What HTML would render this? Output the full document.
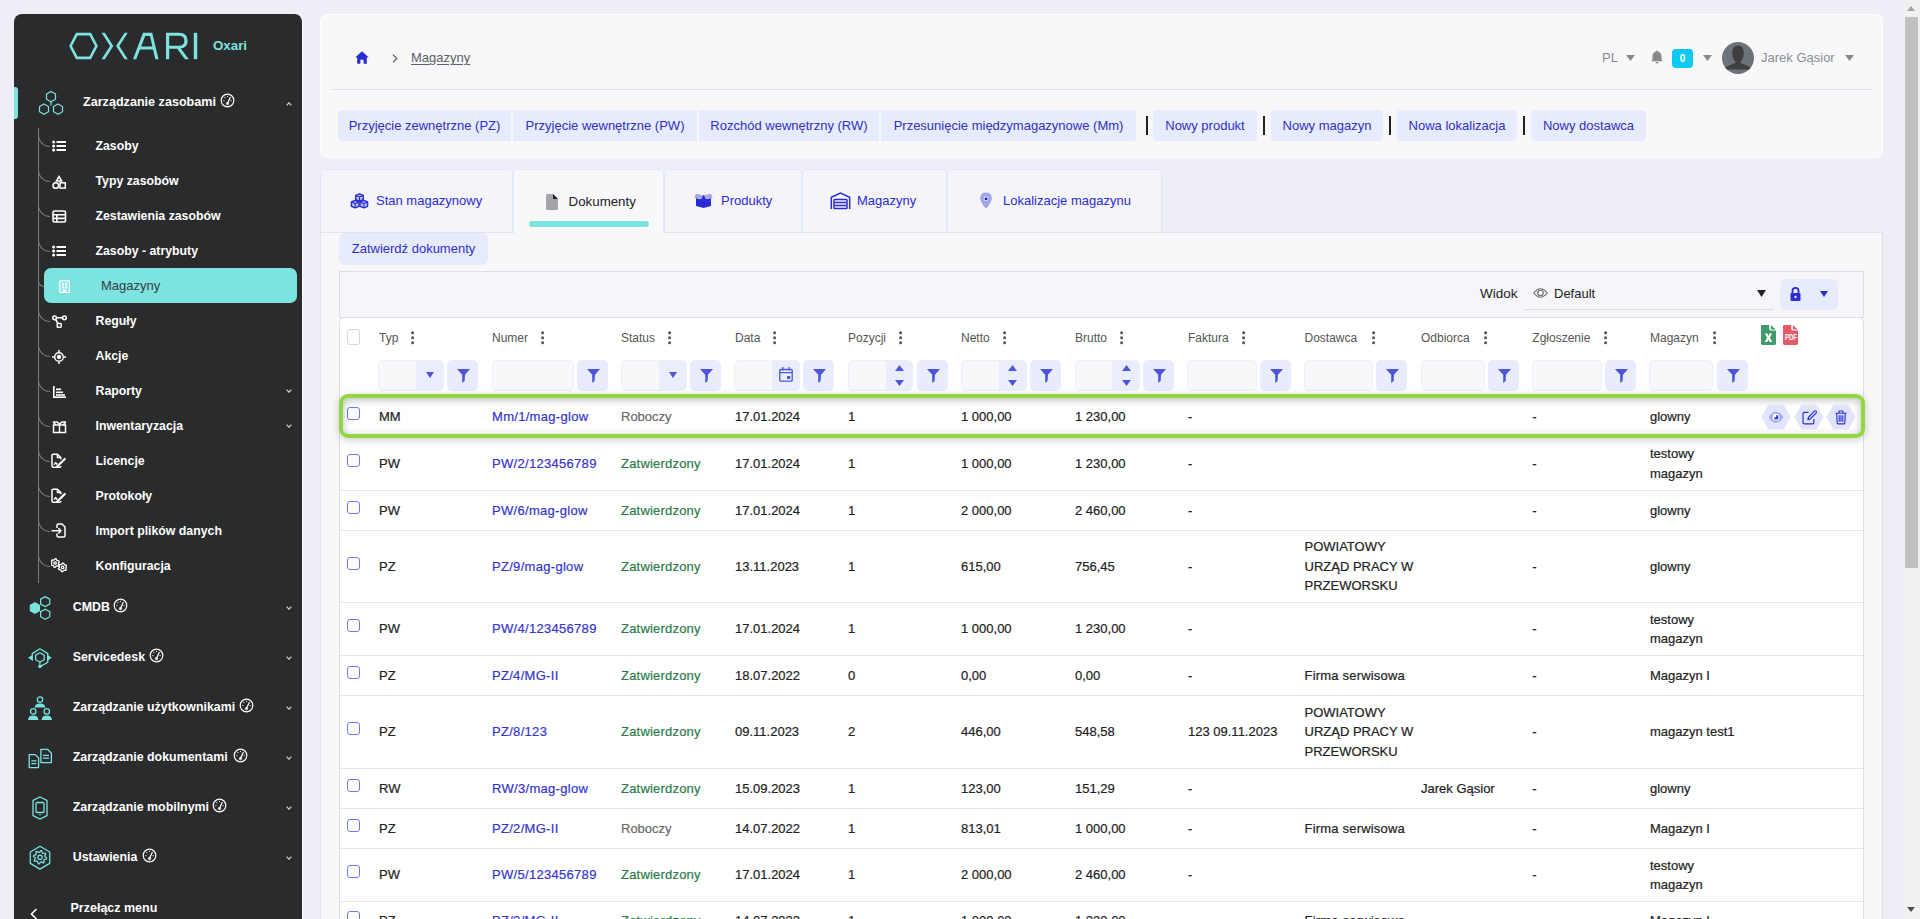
<!DOCTYPE html>
<html><head><meta charset="utf-8">
<style>
*{box-sizing:border-box;margin:0;padding:0}
html,body{width:1920px;height:919px;overflow:hidden;background:#eeeef7;font-family:"Liberation Sans",sans-serif;position:relative}
.abs{position:absolute}
.curve{position:absolute;left:38px;width:12px;height:12px;border-left:1.3px solid #7a7a7a;border-bottom:1.3px solid #7a7a7a;border-bottom-left-radius:12px}
.st{position:absolute;color:#fff;font-weight:bold;line-height:16px;white-space:nowrap}
.c{position:absolute;display:flex;align-items:center;font-size:13px;line-height:19.5px;white-space:nowrap;color:#222;-webkit-text-stroke:0.2px currentColor}
</style></head><body><div style="position:relative;width:1920px;height:919px;overflow:hidden">

<div class="abs" style="left:14px;top:14px;width:289px;height:920px;background:#2a2b2d;border-radius:8px 8px 0 0;border-right:1px solid #fff"></div>
<svg class="abs" style="left:68px;top:32px" width="132" height="28" viewBox="0 0 132 28">
<g fill="none" stroke="#7de3de" stroke-width="2.6" stroke-linejoin="miter">
<path d="M2.6 14 L8.8 2.1 L22.2 2.1 L28.4 14 L22.2 25.9 L8.8 25.9 Z"/>
</g>
<path d="M33.6 .8 H36.8 L45.3 14 L36.8 27.2 H33.6 L42.1 14 Z" fill="#7de3de"/>
<path d="M59.8 .8 H56.6 L48.1 14 L56.6 27.2 H59.8 L51.3 14 Z" fill="#7de3de"/>
<path d="M65 27.2 L75 .8 H84.2 L90.5 27.2 H87.3 L82 4 H77.2 L68.2 27.2 Z M71.8 14.6 H86.3 V17.4 H71.8 Z" fill="#7de3de"/>
<path d="M98 27.2 V.8 H111 Q119.6 .8 119.6 8.8 Q119.6 15.6 112.8 16.6 L120.8 27.2 H117 L109.2 16.8 H101.2 V27.2 Z M101.2 3.8 V13.8 H110.8 Q116.4 13.8 116.4 8.8 Q116.4 3.8 110.8 3.8 Z" fill="#7de3de"/>
<rect x="125.8" y=".8" width="3.4" height="26.4" fill="#7de3de"/>
</svg>
<div class="abs" style="left:213px;top:38px;color:#7de3de;font-weight:bold;font-size:13.3px;line-height:16px">Oxari</div>
<div class="abs" style="left:14px;top:87px;width:4px;height:32px;background:#7de3de;border-radius:0 3px 3px 0"></div>
<svg class="abs" style="left:38px;top:90px" width="26" height="26" viewBox="0 0 26 26"><g fill="none" stroke="#7de3de" stroke-width="1.2">
<path d="M13 1.3999999999999995 L17.5 3.9999999999999996 V9.2 L13 11.8 L8.5 9.2 V3.9999999999999996 Z"/><path d="M6 13.900000000000002 L10.5 16.5 V21.700000000000003 L6 24.3 L1.5 21.700000000000003 V16.5 Z"/><path d="M20 13.900000000000002 L24.5 16.5 V21.700000000000003 L20 24.3 L15.5 21.700000000000003 V16.5 Z"/><path d="M13 11.8 V15.5"/></g></svg>
<div class="st" style="left:83px;top:94px;font-size:12.6px">Zarządzanie zasobami</div>
<svg class="abs" style="left:220px;top:93px" width="15" height="15" viewBox="0 0 15 15"><circle cx="7.5" cy="7.5" r="6.3" fill="none" stroke="#fff" stroke-width="1.2"/><path d="M7.5 10.6 L10.2 4.6" stroke="#fff" stroke-width="1.2" stroke-linecap="round"/><circle cx="7.5" cy="10.6" r="1.2" fill="none" stroke="#fff" stroke-width="1"/><circle cx="3.9" cy="7.6" r=".6" fill="#fff"/><circle cx="4.9" cy="4.6" r=".6" fill="#fff"/><circle cx="7.5" cy="3.3" r=".6" fill="#fff"/><circle cx="11.1" cy="7.6" r=".6" fill="#fff"/></svg>
<svg class="abs" style="left:286px;top:102px" width="6" height="4" viewBox="0 0 6 4"><path d="M.6 3.4 L3 .8 L5.4 3.4" fill="none" stroke="#cfcfcf" stroke-width="1.2"/></svg>
<div class="abs" style="left:38px;top:128px;width:1.3px;height:455px;background:#7a7a7a"></div>
<div class="curve" style="top:135px"></div>
<svg class="abs" style="left:52px;top:140px" width="15" height="14" viewBox="0 0 15 14"><g fill="#fff"><circle cx="1.6" cy="2" r="1.5"/><circle cx="1.6" cy="6" r="1.5"/><circle cx="1.6" cy="10" r="1.5"/><rect x="4.5" y="1" width="9.5" height="2"/><rect x="4.5" y="5" width="9.5" height="2"/><rect x="4.5" y="9" width="9.5" height="2"/></g></svg>
<div class="st" style="left:95.5px;top:138px;font-size:12.3px">Zasoby</div>
<div class="curve" style="top:170px"></div>
<svg class="abs" style="left:52px;top:175px" width="15" height="14" viewBox="0 0 15 14"><g fill="none" stroke="#fff" stroke-width="1.5"><path d="M7 1.5 L9.6 6 H4.4 Z"/><circle cx="3.8" cy="10.5" r="2.8"/><rect x="8" y="7.8" width="5.3" height="5.3"/></g></svg>
<div class="st" style="left:95.5px;top:173px;font-size:12.3px">Typy zasobów</div>
<div class="curve" style="top:205px"></div>
<svg class="abs" style="left:52px;top:210px" width="15" height="14" viewBox="0 0 15 14"><g fill="none" stroke="#fff" stroke-width="1.6"><rect x="1" y="1" width="12.5" height="11" rx="1.5"/><path d="M1 4.8 H13.5 M1 8.4 H13.5 M4.8 4.8 V12"/></g></svg>
<div class="st" style="left:95.5px;top:208px;font-size:12.3px">Zestawienia zasobów</div>
<div class="curve" style="top:240px"></div>
<svg class="abs" style="left:52px;top:245px" width="15" height="14" viewBox="0 0 15 14"><g fill="#fff"><circle cx="1.6" cy="2" r="1.5"/><circle cx="1.6" cy="6" r="1.5"/><circle cx="1.6" cy="10" r="1.5"/><rect x="4.5" y="1" width="9.5" height="2"/><rect x="4.5" y="5" width="9.5" height="2"/><rect x="4.5" y="9" width="9.5" height="2"/></g></svg>
<div class="st" style="left:95.5px;top:243px;font-size:12.3px">Zasoby - atrybuty</div>
<div class="curve" style="top:275px;width:6px"></div>
<div class="abs" style="left:44px;top:268px;width:253px;height:35px;background:#7de3de;border-radius:7px"></div>
<svg class="abs" style="left:59px;top:280px" width="11" height="13" viewBox="0 0 11 13"><g><rect x=".7" y=".7" width="9.8" height="12" rx="1.8" fill="none" stroke="#fff" stroke-width="1.4"/><rect x="2.4" y="2.4" width="6.4" height="8.6" fill="#8ff0f0"/><g fill="#fff"><rect x="3" y="3.2" width="2" height="2"/><rect x="6.2" y="3.2" width="2" height="2"/><rect x="3" y="6.2" width="2" height="2"/><rect x="6.2" y="6.2" width="2" height="2"/><path d="M3.8 12 V9.8 Q5.6 8.6 7.4 9.8 V12 Z"/></g></g></svg>
<div class="abs" style="left:101px;top:278px;color:#363b47;font-size:13px;line-height:16px;white-space:nowrap">Magazyny</div>
<div class="curve" style="top:310px"></div>
<svg class="abs" style="left:52px;top:315px" width="15" height="14" viewBox="0 0 15 14"><g fill="none" stroke="#fff" stroke-width="1.5"><circle cx="2.6" cy="2.8" r="1.9"/><circle cx="12.4" cy="2.8" r="1.9"/><rect x="5.2" y="8.5" width="4" height="3.8" rx=".6"/><path d="M4.5 2.8 H10.5 M3.6 4.5 L6 8.5"/></g></svg>
<div class="st" style="left:95.5px;top:313px;font-size:12.3px">Reguły</div>
<div class="curve" style="top:345px"></div>
<svg class="abs" style="left:52px;top:350px" width="15" height="14" viewBox="0 0 15 14"><g fill="none" stroke="#fff" stroke-width="1.5"><circle cx="7" cy="7" r="4.3"/><circle cx="7" cy="7" r="1.4" fill="#fff"/><path d="M7 0 V2.5 M7 11.5 V14 M0 7 H2.5 M11.5 7 H14"/></g></svg>
<div class="st" style="left:95.5px;top:348px;font-size:12.3px">Akcje</div>
<div class="curve" style="top:380px"></div>
<svg class="abs" style="left:52px;top:385px" width="15" height="14" viewBox="0 0 15 14"><g fill="#fff"><rect x="1" y="1" width="1.6" height="12"/><rect x="1" y="11.4" width="13" height="1.6"/><rect x="4" y="3.5" width="5" height="1.6"/><rect x="4" y="6.5" width="7" height="1.6"/><rect x="4" y="9.2" width="9" height="1.6"/></g></svg>
<div class="st" style="left:95.5px;top:383px;font-size:12.3px">Raporty</div>
<svg class="abs" style="left:286px;top:389px" width="6" height="4" viewBox="0 0 6 4"><path d="M.6 .6 L3 3.2 L5.4 .6" fill="none" stroke="#cfcfcf" stroke-width="1.2"/></svg>
<div class="curve" style="top:415px"></div>
<svg class="abs" style="left:52px;top:420px" width="15" height="14" viewBox="0 0 15 14"><g fill="none" stroke="#fff" stroke-width="1.5"><path d="M1.5 5 H13.5 V12.5 H1.5 Z M7.5 5 V12.5 M1 2 L4 5 M14 2 L11 5 M1 2 H5 L7.5 4 L10 2 H14"/></g></svg>
<div class="st" style="left:95.5px;top:418px;font-size:12.3px">Inwentaryzacja</div>
<svg class="abs" style="left:286px;top:424px" width="6" height="4" viewBox="0 0 6 4"><path d="M.6 .6 L3 3.2 L5.4 .6" fill="none" stroke="#cfcfcf" stroke-width="1.2"/></svg>
<div class="curve" style="top:450px"></div>
<svg class="abs" style="left:51px;top:452px" width="16" height="17" viewBox="0 0 16 17"><g fill="none" stroke="#fff" stroke-width="1.5" stroke-linejoin="round"><path d="M9.8 7.2 V5.6 L6.4 2.2 H2.2 Q1 2.2 1 3.4 V14 Q1 15.2 2.2 15.2 H8.6 Q9.8 15.2 9.8 14"/><path d="M6.4 2.2 V5.6 H9.8"/><path d="M3 12.6 L4.6 10.6 L5.6 12 L6.4 11.4"/></g><path d="M5.6 13.4 L13 6.2 Q13.8 5.4 14.6 6.2 Q15.4 7 14.6 7.8 L7.2 15 L5 15.6 Z" fill="#fff"/></svg>
<div class="st" style="left:95.5px;top:453px;font-size:12.3px">Licencje</div>
<div class="curve" style="top:485px"></div>
<svg class="abs" style="left:51px;top:487px" width="16" height="17" viewBox="0 0 16 17"><g fill="none" stroke="#fff" stroke-width="1.5" stroke-linejoin="round"><path d="M9.8 7.2 V5.6 L6.4 2.2 H2.2 Q1 2.2 1 3.4 V14 Q1 15.2 2.2 15.2 H8.6 Q9.8 15.2 9.8 14"/><path d="M6.4 2.2 V5.6 H9.8"/><path d="M3 12.6 L4.6 10.6 L5.6 12 L6.4 11.4"/></g><path d="M5.6 13.4 L13 6.2 Q13.8 5.4 14.6 6.2 Q15.4 7 14.6 7.8 L7.2 15 L5 15.6 Z" fill="#fff"/></svg>
<div class="st" style="left:95.5px;top:488px;font-size:12.3px">Protokoły</div>
<div class="curve" style="top:520px"></div>
<svg class="abs" style="left:51px;top:522px" width="16" height="17" viewBox="0 0 16 17"><g fill="none" stroke="#fff" stroke-width="1.5" stroke-linejoin="round"><path d="M6 6 V3.2 Q6 2 7.2 2 H11 L14 5 V13.8 Q14 15 12.8 15 H7.2 Q6 15 6 13.8 V11.5"/><path d="M.5 8.8 H10 M7.4 6.2 L10 8.8 L7.4 11.4"/></g></svg>
<div class="st" style="left:95.5px;top:523px;font-size:12.3px">Import plików danych</div>
<div class="curve" style="top:555px"></div>
<svg class="abs" style="left:51px;top:557px" width="16" height="17" viewBox="0 0 16 17"><g fill="none" stroke="#fff" stroke-width="1.3" stroke-linejoin="round"><path d="M4.10 1.70 L5.21 1.85 L5.75 3.14 L6.43 3.67 L7.82 3.85 L8.25 4.89 L7.40 6.00 L7.29 6.85 L7.82 8.15 L7.14 9.04 L5.75 8.86 L4.95 9.19 L4.10 10.30 L2.99 10.15 L2.45 8.86 L1.77 8.33 L0.38 8.15 L-0.05 7.11 L0.80 6.00 L0.91 5.15 L0.38 3.85 L1.06 2.96 L2.45 3.14 L3.25 2.81 Z"/><path d="M11.60 6.10 L12.71 6.25 L13.25 7.54 L13.93 8.07 L15.32 8.25 L15.75 9.29 L14.90 10.40 L14.79 11.25 L15.32 12.55 L14.64 13.44 L13.25 13.26 L12.45 13.59 L11.60 14.70 L10.49 14.55 L9.95 13.26 L9.27 12.73 L7.88 12.55 L7.45 11.51 L8.30 10.40 L8.41 9.55 L7.88 8.25 L8.56 7.36 L9.95 7.54 L10.75 7.21 Z"/><circle cx="4.1" cy="6" r="1.2"/><circle cx="11.6" cy="10.4" r="1.2"/></g></svg>
<div class="st" style="left:95.5px;top:558px;font-size:12.3px">Konfiguracja</div>
<svg class="abs" style="left:29px;top:596px" width="22" height="25" viewBox="0 0 22 25"><g fill="none" stroke="#7de3de" stroke-width="1.2"><path d="M16.2 0.5999999999999996 L20.799999999999997 3.0999999999999996 V8.1 L16.2 10.6 L11.6 8.1 V3.0999999999999996 Z"/><path d="M16.2 13.2 L20.799999999999997 15.7 V20.7 L16.2 23.2 L11.6 20.7 V15.7 Z"/></g><path d="M5.9 6 L11.05 9.0 V15.0 L5.9 18 L0.75 15.0 V9.0 Z" fill="#7de3de"/></svg>
<div class="st" style="left:72.7px;top:599px;font-size:12.4px">CMDB</div>
<svg class="abs" style="left:113px;top:598px" width="15" height="15" viewBox="0 0 15 15"><circle cx="7.5" cy="7.5" r="6.3" fill="none" stroke="#fff" stroke-width="1.2"/><path d="M7.5 10.6 L10.2 4.6" stroke="#fff" stroke-width="1.2" stroke-linecap="round"/><circle cx="7.5" cy="10.6" r="1.2" fill="none" stroke="#fff" stroke-width="1"/><circle cx="3.9" cy="7.6" r=".6" fill="#fff"/><circle cx="4.9" cy="4.6" r=".6" fill="#fff"/><circle cx="7.5" cy="3.3" r=".6" fill="#fff"/><circle cx="11.1" cy="7.6" r=".6" fill="#fff"/></svg>
<svg class="abs" style="left:286px;top:606px" width="6" height="4" viewBox="0 0 6 4"><path d="M.6 .6 L3 3.2 L5.4 .6" fill="none" stroke="#cfcfcf" stroke-width="1.2"/></svg>
<svg class="abs" style="left:28px;top:647px" width="24" height="22" viewBox="0 0 24 22"><g fill="none" stroke="#7de3de" stroke-width="1.25" stroke-linejoin="round"><path d="M11.9 5.800000000000001 L16.2 8.100000000000001 V12.7 L11.9 15.0 L7.6000000000000005 12.7 V8.100000000000001 Z"/><path d="M4.3 8.2 V6.6 L11.9 1.8 L19.8 6.6 V15.3 L12.6 19.4"/><path d="M11.9 15 V18.6"/></g><path d="M0.1 10.8 L4.9 7.6 V13.9 Z M23.7 10.8 L19 7.6 V13.9 Z" fill="#7de3de"/><circle cx="11.9" cy="19.4" r="1.7" fill="#7de3de"/></svg>
<div class="st" style="left:72.7px;top:649px;font-size:12.4px">Servicedesk</div>
<svg class="abs" style="left:149px;top:648px" width="15" height="15" viewBox="0 0 15 15"><circle cx="7.5" cy="7.5" r="6.3" fill="none" stroke="#fff" stroke-width="1.2"/><path d="M7.5 10.6 L10.2 4.6" stroke="#fff" stroke-width="1.2" stroke-linecap="round"/><circle cx="7.5" cy="10.6" r="1.2" fill="none" stroke="#fff" stroke-width="1"/><circle cx="3.9" cy="7.6" r=".6" fill="#fff"/><circle cx="4.9" cy="4.6" r=".6" fill="#fff"/><circle cx="7.5" cy="3.3" r=".6" fill="#fff"/><circle cx="11.1" cy="7.6" r=".6" fill="#fff"/></svg>
<svg class="abs" style="left:286px;top:656px" width="6" height="4" viewBox="0 0 6 4"><path d="M.6 .6 L3 3.2 L5.4 .6" fill="none" stroke="#cfcfcf" stroke-width="1.2"/></svg>
<svg class="abs" style="left:28px;top:696px" width="24" height="24" viewBox="0 0 24 24"><g fill="none" stroke="#7de3de" stroke-width="1.3"><circle cx="12" cy="3.6" r="2.7"/><circle cx="5.2" cy="15.4" r="2.7"/><circle cx="18.8" cy="15.4" r="2.7"/></g><path d="M6.6 11.6 Q7 7.6 12 7.6 Q17 7.6 17.4 11.6 Z M0 24 Q0.4 19.6 5.2 19.6 Q10 19.6 10.4 24 Z M13.6 24 Q14 19.6 18.8 19.6 Q23.6 19.6 24 24 Z" fill="#7de3de"/></svg>
<div class="st" style="left:72.7px;top:699px;font-size:12.4px">Zarządzanie użytkownikami</div>
<svg class="abs" style="left:239px;top:698px" width="15" height="15" viewBox="0 0 15 15"><circle cx="7.5" cy="7.5" r="6.3" fill="none" stroke="#fff" stroke-width="1.2"/><path d="M7.5 10.6 L10.2 4.6" stroke="#fff" stroke-width="1.2" stroke-linecap="round"/><circle cx="7.5" cy="10.6" r="1.2" fill="none" stroke="#fff" stroke-width="1"/><circle cx="3.9" cy="7.6" r=".6" fill="#fff"/><circle cx="4.9" cy="4.6" r=".6" fill="#fff"/><circle cx="7.5" cy="3.3" r=".6" fill="#fff"/><circle cx="11.1" cy="7.6" r=".6" fill="#fff"/></svg>
<svg class="abs" style="left:286px;top:706px" width="6" height="4" viewBox="0 0 6 4"><path d="M.6 .6 L3 3.2 L5.4 .6" fill="none" stroke="#cfcfcf" stroke-width="1.2"/></svg>
<svg class="abs" style="left:28px;top:748px" width="25" height="21" viewBox="0 0 25 21"><g fill="none" stroke="#7de3de" stroke-width="1.3" stroke-linejoin="round"><path d="M1.2 6.6 H7.2 L10.6 10 V19.6 H1.2 Z"/><path d="M3.4 12.8 H8.4 M3.4 15.6 H8.4"/><path d="M12.9 1.3 H19.5 L23.4 5.2 V14.6 H12.9 Z"/><path d="M15 7.4 H21 M15 10.2 H21"/></g></svg>
<div class="st" style="left:72.7px;top:749px;font-size:12.4px">Zarządzanie dokumentami</div>
<svg class="abs" style="left:233px;top:748px" width="15" height="15" viewBox="0 0 15 15"><circle cx="7.5" cy="7.5" r="6.3" fill="none" stroke="#fff" stroke-width="1.2"/><path d="M7.5 10.6 L10.2 4.6" stroke="#fff" stroke-width="1.2" stroke-linecap="round"/><circle cx="7.5" cy="10.6" r="1.2" fill="none" stroke="#fff" stroke-width="1"/><circle cx="3.9" cy="7.6" r=".6" fill="#fff"/><circle cx="4.9" cy="4.6" r=".6" fill="#fff"/><circle cx="7.5" cy="3.3" r=".6" fill="#fff"/><circle cx="11.1" cy="7.6" r=".6" fill="#fff"/></svg>
<svg class="abs" style="left:286px;top:756px" width="6" height="4" viewBox="0 0 6 4"><path d="M.6 .6 L3 3.2 L5.4 .6" fill="none" stroke="#cfcfcf" stroke-width="1.2"/></svg>
<svg class="abs" style="left:32px;top:796px" width="16" height="24" viewBox="0 0 16 24"><g fill="none" stroke="#7de3de" stroke-width="1.3"><path d="M8 1 L15 4.5 V19.5 L8 23 L1 19.5 V4.5 Z"/><rect x="4" y="6.5" width="8" height="10" rx="1"/></g><circle cx="8" cy="18.8" r=".8" fill="#7de3de"/></svg>
<div class="st" style="left:72.7px;top:799px;font-size:12.4px">Zarządzanie mobilnymi</div>
<svg class="abs" style="left:212px;top:798px" width="15" height="15" viewBox="0 0 15 15"><circle cx="7.5" cy="7.5" r="6.3" fill="none" stroke="#fff" stroke-width="1.2"/><path d="M7.5 10.6 L10.2 4.6" stroke="#fff" stroke-width="1.2" stroke-linecap="round"/><circle cx="7.5" cy="10.6" r="1.2" fill="none" stroke="#fff" stroke-width="1"/><circle cx="3.9" cy="7.6" r=".6" fill="#fff"/><circle cx="4.9" cy="4.6" r=".6" fill="#fff"/><circle cx="7.5" cy="3.3" r=".6" fill="#fff"/><circle cx="11.1" cy="7.6" r=".6" fill="#fff"/></svg>
<svg class="abs" style="left:286px;top:806px" width="6" height="4" viewBox="0 0 6 4"><path d="M.6 .6 L3 3.2 L5.4 .6" fill="none" stroke="#cfcfcf" stroke-width="1.2"/></svg>
<svg class="abs" style="left:29px;top:845px" width="22" height="26" viewBox="0 0 22 26"><g fill="none" stroke="#7de3de" stroke-width="1.25" stroke-linejoin="round"><path d="M11 1.299999999999999 L20.7 6.999999999999999 V18.4 L11 24.1 L1.3000000000000007 18.4 V6.999999999999999 Z"/><path d="M11.65 5.63 L12.92 5.88 L13.31 7.88 L14.11 8.41 L16.10 8.01 L16.82 9.09 L15.69 10.78 L15.88 11.72 L17.57 12.85 L17.32 14.12 L15.32 14.51 L14.79 15.31 L15.19 17.30 L14.11 18.02 L12.42 16.89 L11.48 17.08 L10.35 18.77 L9.08 18.52 L8.69 16.52 L7.89 15.99 L5.90 16.39 L5.18 15.31 L6.31 13.62 L6.12 12.68 L4.43 11.55 L4.68 10.28 L6.68 9.89 L7.21 9.09 L6.81 7.10 L7.89 6.38 L9.58 7.51 L10.52 7.32 Z"/><circle cx="11" cy="12.2" r="2.2"/></g></svg>
<div class="st" style="left:72.7px;top:849px;font-size:12.4px">Ustawienia</div>
<svg class="abs" style="left:142px;top:848px" width="15" height="15" viewBox="0 0 15 15"><circle cx="7.5" cy="7.5" r="6.3" fill="none" stroke="#fff" stroke-width="1.2"/><path d="M7.5 10.6 L10.2 4.6" stroke="#fff" stroke-width="1.2" stroke-linecap="round"/><circle cx="7.5" cy="10.6" r="1.2" fill="none" stroke="#fff" stroke-width="1"/><circle cx="3.9" cy="7.6" r=".6" fill="#fff"/><circle cx="4.9" cy="4.6" r=".6" fill="#fff"/><circle cx="7.5" cy="3.3" r=".6" fill="#fff"/><circle cx="11.1" cy="7.6" r=".6" fill="#fff"/></svg>
<svg class="abs" style="left:286px;top:856px" width="6" height="4" viewBox="0 0 6 4"><path d="M.6 .6 L3 3.2 L5.4 .6" fill="none" stroke="#cfcfcf" stroke-width="1.2"/></svg>
<div class="st" style="left:70.5px;top:900px;font-size:12.5px">Przełącz menu</div>
<svg class="abs" style="left:30px;top:908px" width="8" height="12" viewBox="0 0 8 12"><path d="M6.5 1 L1.5 6 L6.5 11" fill="none" stroke="#fff" stroke-width="1.6"/></svg>
<div class="abs" style="left:320px;top:14px;width:1563px;height:144px;background:#f8f8fb;border:1px solid #fff;border-radius:7px"></div>
<svg class="abs" style="left:355px;top:51px" width="14" height="13" viewBox="0 0 14 13"><path d="M7 0.3 L13.8 6.6 H11.8 V12.8 H8.6 V8.8 H5.4 V12.8 H2.2 V6.6 H0.2 Z" fill="#2b2bd4"/></svg>
<svg class="abs" style="left:392px;top:54px" width="6" height="9" viewBox="0 0 6 9"><path d="M1 .8 L4.8 4.5 L1 8.2" fill="none" stroke="#666" stroke-width="1.2"/></svg>
<div class="abs" style="left:411px;top:50px;color:#5a5f6a;font-size:13px;line-height:16px;text-decoration:underline;text-underline-offset:2px">Magazyny</div>
<div class="abs" style="left:331px;top:89px;width:1541px;height:1px;background:#dfe1e6"></div>
<div class="abs" style="left:1602px;top:50px;color:#8a8d93;font-size:13px;line-height:16px">PL</div>
<svg class="abs" style="left:1626px;top:55px" width="9" height="6" viewBox="0 0 9 6"><path d="M0 0 H9 L4.5 6 Z" fill="#8a8a8a"/></svg>
<svg class="abs" style="left:1651px;top:50px" width="12" height="14" viewBox="0 0 12 14"><path d="M6 0.5 Q6.9 .5 6.9 1.5 Q10.5 2.3 10.5 6.5 V9.5 L11.8 11.2 H0.2 L1.5 9.5 V6.5 Q1.5 2.3 5.1 1.5 Q5.1 .5 6 .5 Z M4.3 12 H7.7 Q7.5 13.6 6 13.6 Q4.5 13.6 4.3 12 Z" fill="#8a8a8a"/></svg>
<div class="abs" style="left:1672px;top:49px;width:21px;height:19px;background:#0dcaf0;border-radius:4px;color:#fff;font-weight:bold;font-size:10px;line-height:19px;text-align:center">0</div>
<svg class="abs" style="left:1703px;top:55px" width="9" height="6" viewBox="0 0 9 6"><path d="M0 0 H9 L4.5 6 Z" fill="#8a8a8a"/></svg>
<svg class="abs" style="left:1722px;top:42px" width="32" height="32" viewBox="0 0 32 32"><defs><clipPath id="av"><circle cx="16" cy="16" r="16"/></clipPath></defs><circle cx="16" cy="16" r="16" fill="#6c737b"/><g clip-path="url(#av)" fill="#3f3f40"><path d="M16 3.6 Q21.6 3.6 21.8 10.5 Q21.8 14.5 20.6 16.6 Q19.5 19 18.8 19.8 V21 L26 24 Q28.6 25.3 29.6 27.6 H2.4 Q3.4 25.3 6 24 L13.2 21 V19.8 Q12.5 19 11.4 16.6 Q10.2 14.5 10.2 10.5 Q10.4 3.6 16 3.6 Z"/></g></svg>
<div class="abs" style="left:1761px;top:50px;color:#8a8d93;font-size:13px;line-height:16px;white-space:nowrap">Jarek Gąsior</div>
<svg class="abs" style="left:1845px;top:55px" width="9" height="6" viewBox="0 0 9 6"><path d="M0 0 H9 L4.5 6 Z" fill="#8a8a8a"/></svg>
<div class="abs" style="left:338px;top:110px;width:173px;height:31px;background:#e6ebfd;border-radius:4px 0 0 4px;color:#3030c8;font-size:13px;line-height:31px;text-align:center;white-space:nowrap">Przyjęcie zewnętrzne (PZ)</div>
<div class="abs" style="left:513px;top:110px;width:184px;height:31px;background:#e6ebfd;border-radius:0;color:#3030c8;font-size:13px;line-height:31px;text-align:center;white-space:nowrap">Przyjęcie wewnętrzne (PW)</div>
<div class="abs" style="left:699px;top:110px;width:180px;height:31px;background:#e6ebfd;border-radius:0;color:#3030c8;font-size:13px;line-height:31px;text-align:center;white-space:nowrap">Rozchód wewnętrzny (RW)</div>
<div class="abs" style="left:881px;top:110px;width:255px;height:31px;background:#e6ebfd;border-radius:0 4px 4px 0;color:#3030c8;font-size:13px;line-height:31px;text-align:center;white-space:nowrap">Przesunięcie międzymagazynowe (Mm)</div>
<div class="abs" style="left:1153px;top:110px;width:104px;height:31px;background:#e6ebfd;border-radius:4px;color:#3030c8;font-size:13px;line-height:31px;text-align:center;white-space:nowrap">Nowy produkt</div>
<div class="abs" style="left:1271px;top:110px;width:112px;height:31px;background:#e6ebfd;border-radius:4px;color:#3030c8;font-size:13px;line-height:31px;text-align:center;white-space:nowrap">Nowy magazyn</div>
<div class="abs" style="left:1397px;top:110px;width:120px;height:31px;background:#e6ebfd;border-radius:4px;color:#3030c8;font-size:13px;line-height:31px;text-align:center;white-space:nowrap">Nowa lokalizacja</div>
<div class="abs" style="left:1531px;top:110px;width:115px;height:31px;background:#e6ebfd;border-radius:4px;color:#3030c8;font-size:13px;line-height:31px;text-align:center;white-space:nowrap">Nowy dostawca</div>
<div class="abs" style="left:1146px;top:116px;width:2px;height:19px;background:#222"></div>
<div class="abs" style="left:1263px;top:116px;width:2px;height:19px;background:#222"></div>
<div class="abs" style="left:1389px;top:116px;width:2px;height:19px;background:#222"></div>
<div class="abs" style="left:1523px;top:116px;width:2px;height:19px;background:#222"></div>
<div class="abs" style="left:320px;top:169px;width:193px;height:64px;background:#f4f4f9;border:1px solid #e2e8fb;border-bottom:none;border-radius:4px 4px 0 0"></div>
<div class="abs" style="left:513px;top:169px;width:151px;height:64px;background:#f8f8fb;border:1px solid #e2e8fb;border-bottom:none;border-radius:4px 4px 0 0"></div>
<div class="abs" style="left:664px;top:169px;width:138px;height:64px;background:#f4f4f9;border:1px solid #e2e8fb;border-bottom:none;border-radius:4px 4px 0 0"></div>
<div class="abs" style="left:802px;top:169px;width:145px;height:64px;background:#f4f4f9;border:1px solid #e2e8fb;border-bottom:none;border-radius:4px 4px 0 0"></div>
<div class="abs" style="left:947px;top:169px;width:215px;height:64px;background:#f4f4f9;border:1px solid #e2e8fb;border-bottom:none;border-radius:4px 4px 0 0"></div>
<div class="abs" style="left:320px;top:232px;width:1563px;height:700px;background:#f8f8fb;border-top:1px solid #e3e5ee;border-left:1px solid #e3e5ee;border-right:1px solid #dde0e6"></div>
<div class="abs" style="left:514px;top:232px;width:149px;height:1px;background:#f8f8fb"></div>
<svg class="abs" style="left:350px;top:193px" width="19" height="16" viewBox="0 0 19 16"><g stroke="#2c2cd4" stroke-width="1.4" stroke-linejoin="round" fill="#b9bdf0">
<path d="M9.5 .8 L13.3 2.4 V6.6 L9.5 8.2 L5.7 6.6 V2.4 Z"/><path d="M5.2 7.4 L9 9 V13.3 L5.2 14.9 L1.4 13.3 V9 Z"/><path d="M13.8 7.4 L17.6 9 V13.3 L13.8 14.9 L10 13.3 V9 Z"/></g>
<g stroke="#2c2cd4" stroke-width="1.1" fill="none"><path d="M5.7 2.4 L9.5 4 L13.3 2.4 M9.5 4 V8.2 M1.4 9 L5.2 10.6 L9 9 M5.2 10.6 V14.9 M10 9 L13.8 10.6 L17.6 9 M13.8 10.6 V14.9"/></g></svg>
<div class="abs" style="left:376px;top:193px;color:#2c2cd4;font-size:13px;line-height:16px;white-space:nowrap">Stan magazynowy</div>
<svg class="abs" style="left:546px;top:194px" width="12" height="16" viewBox="0 0 12 16"><path d="M1.5 0 H7 L12 5 V14.5 Q12 16 10.5 16 H1.5 Q0 16 0 14.5 V1.5 Q0 0 1.5 0 Z" fill="#a4a5ab"/><path d="M7 0 L12 5 H7 Z" fill="#222"/></svg>
<div class="abs" style="left:568.6px;top:194px;color:#222;font-size:13.3px;line-height:16px;white-space:nowrap">Dokumenty</div>
<div class="abs" style="left:529px;top:221px;width:120px;height:6px;background:#7de3de;border-radius:3px"></div>
<svg class="abs" style="left:694px;top:193px" width="19" height="15" viewBox="0 0 19 15"><path d="M0.3 4.8 L2 .8 L9.5 2.5 L17 .8 L18.7 4.8 L9.5 6 Z" fill="#a3a6e8"/><path d="M2 5 Q5 6.5 7.5 5.8 L9.5 1.8 L11.5 5.8 Q14 6.5 17 5 V13 L9.5 15 L2 13 Z" fill="#2c2cd4"/></svg>
<div class="abs" style="left:721px;top:193px;color:#2c2cd4;font-size:13px;line-height:16px;white-space:nowrap">Produkty</div>
<svg class="abs" style="left:830px;top:192px" width="21" height="18" viewBox="0 0 21 18"><g fill="none" stroke="#2c2cd4" stroke-width="1.5"><path d="M1.3 17 V5.3 L10.5 1 L19.7 5.3 V17"/><rect x="4" y="7.5" width="13" height="9" rx=".8"/><path d="M4.5 10.5 H16.5 M4.5 13.5 H16.5"/></g></svg>
<div class="abs" style="left:857px;top:193px;color:#2c2cd4;font-size:13px;line-height:16px;white-space:nowrap">Magazyny</div>
<svg class="abs" style="left:980px;top:192px" width="12" height="17" viewBox="0 0 12 17"><path d="M6 .5 Q11.8 .5 11.8 6.3 Q11.8 10 6 16.8 Q.2 10 .2 6.3 Q.2 .5 6 .5 Z" fill="#a0a4ea"/><circle cx="6" cy="6.8" r="2.3" fill="#fff"/><circle cx="6" cy="6.8" r="1.5" fill="#1a1ad0"/></svg>
<div class="abs" style="left:1003px;top:193px;color:#2c2cd4;font-size:13px;line-height:16px;white-space:nowrap">Lokalizacje magazynu</div>
<div class="abs" style="left:339px;top:233px;width:149px;height:32px;background:#e6ebfd;border-radius:6px;color:#3030c8;font-size:13px;line-height:31px;text-align:center;white-space:nowrap">Zatwierdź dokumenty</div>
<div class="abs" style="left:339px;top:271px;width:1525px;height:47px;background:#f6f6fa;border:1px solid #dcdee7"></div>
<div class="abs" style="left:1480px;top:286px;color:#222;font-size:13.5px;line-height:16px">Widok</div>
<svg class="abs" style="left:1533px;top:287px" width="15" height="12" viewBox="0 0 15 12"><path d="M.8 6 Q7.5 -2.5 14.2 6 Q7.5 14.5 .8 6 Z" fill="none" stroke="#666" stroke-width="1.1"/><circle cx="7.5" cy="6" r="2.7" fill="none" stroke="#666" stroke-width="1.1"/></svg>
<div class="abs" style="left:1554px;top:286px;color:#222;font-size:13px;line-height:16px">Default</div>
<div class="abs" style="left:1524px;top:309px;width:250px;height:1px;background:#dadce3"></div>
<svg class="abs" style="left:1757px;top:290px" width="9" height="7" viewBox="0 0 9 7"><path d="M0 0 H9 L4.5 7 Z" fill="#222"/></svg>
<div class="abs" style="left:1780px;top:279px;width:58px;height:31px;background:#e6ebfd;border-radius:6px"></div>
<svg class="abs" style="left:1790px;top:287px" width="11" height="14" viewBox="0 0 11 14"><path d="M2.5 6 V3.8 Q2.5 .9 5.5 .9 Q8.5 .9 8.5 3.8 V6" fill="none" stroke="#2c2cd4" stroke-width="1.8"/><rect x=".5" y="6" width="10" height="8" rx="1" fill="#2c2cd4"/><circle cx="5.5" cy="10" r="1.2" fill="#e6ebfd"/></svg>
<svg class="abs" style="left:1820px;top:291px" width="8" height="6" viewBox="0 0 8 6"><path d="M0 0 H8 L4 6 Z" fill="#2c2cd4"/></svg>
<div class="abs" style="left:339px;top:317px;width:1525px;height:620px;background:#fff;border:1px solid #dcdfe6;border-radius:6px 6px 0 0"></div>
<div class="abs" style="left:347px;top:329px;width:13px;height:15.5px;border:1.2px solid #d3d6dd;border-radius:3px;background:#fff"></div>
<div class="abs" style="left:379px;top:330px;color:#555;font-size:12px;line-height:16px;white-space:nowrap">Typ</div>
<svg class="abs" style="left:410.8px;top:331px" width="4" height="14" viewBox="0 0 4 14"><circle cx="1.6" cy="1.8" r="1.5" fill="#555"/><circle cx="1.6" cy="6.8" r="1.5" fill="#555"/><circle cx="1.6" cy="11.8" r="1.5" fill="#555"/></svg>
<div class="abs" style="left:492px;top:330px;color:#555;font-size:12px;line-height:16px;white-space:nowrap">Numer</div>
<svg class="abs" style="left:541.0px;top:331px" width="4" height="14" viewBox="0 0 4 14"><circle cx="1.6" cy="1.8" r="1.5" fill="#555"/><circle cx="1.6" cy="6.8" r="1.5" fill="#555"/><circle cx="1.6" cy="11.8" r="1.5" fill="#555"/></svg>
<div class="abs" style="left:621px;top:330px;color:#555;font-size:12px;line-height:16px;white-space:nowrap">Status</div>
<svg class="abs" style="left:667.7px;top:331px" width="4" height="14" viewBox="0 0 4 14"><circle cx="1.6" cy="1.8" r="1.5" fill="#555"/><circle cx="1.6" cy="6.8" r="1.5" fill="#555"/><circle cx="1.6" cy="11.8" r="1.5" fill="#555"/></svg>
<div class="abs" style="left:735px;top:330px;color:#555;font-size:12px;line-height:16px;white-space:nowrap">Data</div>
<svg class="abs" style="left:773.0px;top:331px" width="4" height="14" viewBox="0 0 4 14"><circle cx="1.6" cy="1.8" r="1.5" fill="#555"/><circle cx="1.6" cy="6.8" r="1.5" fill="#555"/><circle cx="1.6" cy="11.8" r="1.5" fill="#555"/></svg>
<div class="abs" style="left:848px;top:330px;color:#555;font-size:12px;line-height:16px;white-space:nowrap">Pozycji</div>
<svg class="abs" style="left:898.8px;top:331px" width="4" height="14" viewBox="0 0 4 14"><circle cx="1.6" cy="1.8" r="1.5" fill="#555"/><circle cx="1.6" cy="6.8" r="1.5" fill="#555"/><circle cx="1.6" cy="11.8" r="1.5" fill="#555"/></svg>
<div class="abs" style="left:961px;top:330px;color:#555;font-size:12px;line-height:16px;white-space:nowrap">Netto</div>
<svg class="abs" style="left:1003.0px;top:331px" width="4" height="14" viewBox="0 0 4 14"><circle cx="1.6" cy="1.8" r="1.5" fill="#555"/><circle cx="1.6" cy="6.8" r="1.5" fill="#555"/><circle cx="1.6" cy="11.8" r="1.5" fill="#555"/></svg>
<div class="abs" style="left:1075px;top:330px;color:#555;font-size:12px;line-height:16px;white-space:nowrap">Brutto</div>
<svg class="abs" style="left:1119.9px;top:331px" width="4" height="14" viewBox="0 0 4 14"><circle cx="1.6" cy="1.8" r="1.5" fill="#555"/><circle cx="1.6" cy="6.8" r="1.5" fill="#555"/><circle cx="1.6" cy="11.8" r="1.5" fill="#555"/></svg>
<div class="abs" style="left:1188px;top:330px;color:#555;font-size:12px;line-height:16px;white-space:nowrap">Faktura</div>
<svg class="abs" style="left:1241.6px;top:331px" width="4" height="14" viewBox="0 0 4 14"><circle cx="1.6" cy="1.8" r="1.5" fill="#555"/><circle cx="1.6" cy="6.8" r="1.5" fill="#555"/><circle cx="1.6" cy="11.8" r="1.5" fill="#555"/></svg>
<div class="abs" style="left:1304.5px;top:330px;color:#555;font-size:12px;line-height:16px;white-space:nowrap">Dostawca</div>
<svg class="abs" style="left:1371.7px;top:331px" width="4" height="14" viewBox="0 0 4 14"><circle cx="1.6" cy="1.8" r="1.5" fill="#555"/><circle cx="1.6" cy="6.8" r="1.5" fill="#555"/><circle cx="1.6" cy="11.8" r="1.5" fill="#555"/></svg>
<div class="abs" style="left:1421px;top:330px;color:#555;font-size:12px;line-height:16px;white-space:nowrap">Odbiorca</div>
<svg class="abs" style="left:1483.9px;top:331px" width="4" height="14" viewBox="0 0 4 14"><circle cx="1.6" cy="1.8" r="1.5" fill="#555"/><circle cx="1.6" cy="6.8" r="1.5" fill="#555"/><circle cx="1.6" cy="11.8" r="1.5" fill="#555"/></svg>
<div class="abs" style="left:1532.3px;top:330px;color:#555;font-size:12px;line-height:16px;white-space:nowrap">Zgłoszenie</div>
<svg class="abs" style="left:1603.8px;top:331px" width="4" height="14" viewBox="0 0 4 14"><circle cx="1.6" cy="1.8" r="1.5" fill="#555"/><circle cx="1.6" cy="6.8" r="1.5" fill="#555"/><circle cx="1.6" cy="11.8" r="1.5" fill="#555"/></svg>
<div class="abs" style="left:1650px;top:330px;color:#555;font-size:12px;line-height:16px;white-space:nowrap">Magazyn</div>
<svg class="abs" style="left:1712.7px;top:331px" width="4" height="14" viewBox="0 0 4 14"><circle cx="1.6" cy="1.8" r="1.5" fill="#555"/><circle cx="1.6" cy="6.8" r="1.5" fill="#555"/><circle cx="1.6" cy="11.8" r="1.5" fill="#555"/></svg>
<svg class="abs" style="left:1761px;top:325px" width="15" height="20" viewBox="0 0 15 20"><path d="M0 0 H8.2 V3.4 Q8.2 5.6 10.4 5.6 H15 V18.6 Q15 19.9 13.6 19.9 H1.4 Q0 19.9 0 18.6 Z" fill="#3f9b6c"/><path d="M9.9 0 L14.6 4.5 H11.1 Q9.9 4.5 9.9 3.3 Z" fill="#3f9b6c"/><path d="M3.8 8.6 H6.4 L7.5 10.8 L8.6 8.6 H11.2 L8.9 12.7 L11.3 16.9 H8.7 L7.5 14.6 L6.3 16.9 H3.7 L6.1 12.7 Z" fill="#fff"/></svg>
<svg class="abs" style="left:1783px;top:325px" width="15" height="20" viewBox="0 0 15 20"><path d="M1.4 0 H8.2 V3.4 Q8.2 5.6 10.4 5.6 H15 V18.6 Q15 19.9 13.6 19.9 H1.4 Q0 19.9 0 18.6 V1.4 Q0 0 1.4 0 Z" fill="#e35b69"/><path d="M9.9 0 L14.6 4.5 H11.1 Q9.9 4.5 9.9 3.3 Z" fill="#e35b69"/><text x="1.9" y="14.6" textLength="12" lengthAdjust="spacingAndGlyphs" font-family="Liberation Sans" font-weight="bold" font-size="8.6" fill="#fff">PDF</text></svg>
<div class="abs" style="left:378.2px;top:360px;width:65.6px;height:31px;background:#f8f8fb;border:1px solid #eceffa;border-radius:5px;overflow:hidden"><div class="abs" style="left:36.8px;top:-1px;width:27.8px;height:31px;background:#eaeefc"></div></div>
<svg class="abs" style="left:425.9px;top:372px" width="8" height="6" viewBox="0 0 8 6"><path d="M0 0 H8 L4 6 Z" fill="#4f55d8"/></svg>
<div class="abs" style="left:447px;top:360px;width:31px;height:31px;background:#e8ecfc;border-radius:5px"></div>
<svg class="abs" style="left:456.5px;top:369px" width="13" height="14" viewBox="0 0 13 14"><path d="M0 0 H13 L8 5.8 L7.6 12 L5.2 14 L5.2 5.8 Z" fill="#4f55d8"/></svg>
<div class="abs" style="left:492px;top:360px;width:81.8px;height:31px;background:#f8f8fb;border:1px solid #eceffa;border-radius:5px;overflow:hidden"></div>
<div class="abs" style="left:577px;top:360px;width:31px;height:31px;background:#e8ecfc;border-radius:5px"></div>
<svg class="abs" style="left:586.5px;top:369px" width="13" height="14" viewBox="0 0 13 14"><path d="M0 0 H13 L8 5.8 L7.6 12 L5.2 14 L5.2 5.8 Z" fill="#4f55d8"/></svg>
<div class="abs" style="left:621.3px;top:360px;width:65.7px;height:31px;background:#f8f8fb;border:1px solid #eceffa;border-radius:5px;overflow:hidden"><div class="abs" style="left:36.7px;top:-1px;width:28.0px;height:31px;background:#eaeefc"></div></div>
<svg class="abs" style="left:669.0px;top:372px" width="8" height="6" viewBox="0 0 8 6"><path d="M0 0 H8 L4 6 Z" fill="#4f55d8"/></svg>
<div class="abs" style="left:690px;top:360px;width:31px;height:31px;background:#e8ecfc;border-radius:5px"></div>
<svg class="abs" style="left:699.5px;top:369px" width="13" height="14" viewBox="0 0 13 14"><path d="M0 0 H13 L8 5.8 L7.6 12 L5.2 14 L5.2 5.8 Z" fill="#4f55d8"/></svg>
<div class="abs" style="left:734.4px;top:360px;width:65.4px;height:31px;background:#f8f8fb;border:1px solid #eceffa;border-radius:5px;overflow:hidden"><div class="abs" style="left:36.8px;top:-1px;width:27.6px;height:31px;background:#eaeefc"></div></div>
<svg class="abs" style="left:779.0px;top:367px" width="14" height="15" viewBox="0 0 14 15"><g fill="none" stroke="#4f55d8" stroke-width="1.3"><rect x=".8" y="2.5" width="12.4" height="11.7" rx="1"/><path d="M.8 5.7 H13.2 M3.8 0 V3.5 M10.2 0 V3.5"/></g><rect x="8" y="9" width="3.2" height="3" fill="#4f55d8"/></svg>
<div class="abs" style="left:803px;top:360px;width:31px;height:31px;background:#e8ecfc;border-radius:5px"></div>
<svg class="abs" style="left:812.5px;top:369px" width="13" height="14" viewBox="0 0 13 14"><path d="M0 0 H13 L8 5.8 L7.6 12 L5.2 14 L5.2 5.8 Z" fill="#4f55d8"/></svg>
<div class="abs" style="left:848.2px;top:360px;width:64.7px;height:31px;background:#f8f8fb;border:1px solid #eceffa;border-radius:5px;overflow:hidden"><div class="abs" style="left:36.8px;top:-1px;width:26.9px;height:31px;background:#eaeefc"></div></div>
<svg class="abs" style="left:895.0px;top:365px" width="9" height="21" viewBox="0 0 9 21"><path d="M0 6 H9 L4.5 0 Z M0 15 H9 L4.5 21 Z" fill="#4f55d8"/></svg>
<div class="abs" style="left:917px;top:360px;width:31px;height:31px;background:#e8ecfc;border-radius:5px"></div>
<svg class="abs" style="left:926.5px;top:369px" width="13" height="14" viewBox="0 0 13 14"><path d="M0 0 H13 L8 5.8 L7.6 12 L5.2 14 L5.2 5.8 Z" fill="#4f55d8"/></svg>
<div class="abs" style="left:961.3px;top:360px;width:65.4px;height:31px;background:#f8f8fb;border:1px solid #eceffa;border-radius:5px;overflow:hidden"><div class="abs" style="left:36.7px;top:-1px;width:27.7px;height:31px;background:#eaeefc"></div></div>
<svg class="abs" style="left:1008.4px;top:365px" width="9" height="21" viewBox="0 0 9 21"><path d="M0 6 H9 L4.5 0 Z M0 15 H9 L4.5 21 Z" fill="#4f55d8"/></svg>
<div class="abs" style="left:1030.3px;top:360px;width:31px;height:31px;background:#e8ecfc;border-radius:5px"></div>
<svg class="abs" style="left:1039.8px;top:369px" width="13" height="14" viewBox="0 0 13 14"><path d="M0 0 H13 L8 5.8 L7.6 12 L5.2 14 L5.2 5.8 Z" fill="#4f55d8"/></svg>
<div class="abs" style="left:1074.6px;top:360px;width:65.1px;height:31px;background:#f8f8fb;border:1px solid #eceffa;border-radius:5px;overflow:hidden"><div class="abs" style="left:36.9px;top:-1px;width:27.2px;height:31px;background:#eaeefc"></div></div>
<svg class="abs" style="left:1121.6px;top:365px" width="9" height="21" viewBox="0 0 9 21"><path d="M0 6 H9 L4.5 0 Z M0 15 H9 L4.5 21 Z" fill="#4f55d8"/></svg>
<div class="abs" style="left:1143.3px;top:360px;width:31px;height:31px;background:#e8ecfc;border-radius:5px"></div>
<svg class="abs" style="left:1152.8px;top:369px" width="13" height="14" viewBox="0 0 13 14"><path d="M0 0 H13 L8 5.8 L7.6 12 L5.2 14 L5.2 5.8 Z" fill="#4f55d8"/></svg>
<div class="abs" style="left:1187.3px;top:360px;width:69.4px;height:31px;background:#f8f8fb;border:1px solid #eceffa;border-radius:5px;overflow:hidden"></div>
<div class="abs" style="left:1260.2px;top:360px;width:31px;height:31px;background:#e8ecfc;border-radius:5px"></div>
<svg class="abs" style="left:1269.7px;top:369px" width="13" height="14" viewBox="0 0 13 14"><path d="M0 0 H13 L8 5.8 L7.6 12 L5.2 14 L5.2 5.8 Z" fill="#4f55d8"/></svg>
<div class="abs" style="left:1304.3px;top:360px;width:68.4px;height:31px;background:#f8f8fb;border:1px solid #eceffa;border-radius:5px;overflow:hidden"></div>
<div class="abs" style="left:1376.2px;top:360px;width:31px;height:31px;background:#e8ecfc;border-radius:5px"></div>
<svg class="abs" style="left:1385.7px;top:369px" width="13" height="14" viewBox="0 0 13 14"><path d="M0 0 H13 L8 5.8 L7.6 12 L5.2 14 L5.2 5.8 Z" fill="#4f55d8"/></svg>
<div class="abs" style="left:1421.1px;top:360px;width:63.6px;height:31px;background:#f8f8fb;border:1px solid #eceffa;border-radius:5px;overflow:hidden"></div>
<div class="abs" style="left:1488px;top:360px;width:31px;height:31px;background:#e8ecfc;border-radius:5px"></div>
<svg class="abs" style="left:1497.5px;top:369px" width="13" height="14" viewBox="0 0 13 14"><path d="M0 0 H13 L8 5.8 L7.6 12 L5.2 14 L5.2 5.8 Z" fill="#4f55d8"/></svg>
<div class="abs" style="left:1532.3px;top:360px;width:69.5px;height:31px;background:#f8f8fb;border:1px solid #eceffa;border-radius:5px;overflow:hidden"></div>
<div class="abs" style="left:1605px;top:360px;width:31px;height:31px;background:#e8ecfc;border-radius:5px"></div>
<svg class="abs" style="left:1614.5px;top:369px" width="13" height="14" viewBox="0 0 13 14"><path d="M0 0 H13 L8 5.8 L7.6 12 L5.2 14 L5.2 5.8 Z" fill="#4f55d8"/></svg>
<div class="abs" style="left:1649.2px;top:360px;width:63.5px;height:31px;background:#f8f8fb;border:1px solid #eceffa;border-radius:5px;overflow:hidden"></div>
<div class="abs" style="left:1717.3px;top:360px;width:31px;height:31px;background:#e8ecfc;border-radius:5px"></div>
<svg class="abs" style="left:1726.8px;top:369px" width="13" height="14" viewBox="0 0 13 14"><path d="M0 0 H13 L8 5.8 L7.6 12 L5.2 14 L5.2 5.8 Z" fill="#4f55d8"/></svg>
<div class="abs" style="left:347px;top:407.0px;width:13px;height:13px;border:1.2px solid #6f78ee;border-radius:3px;background:#fff"></div>
<div class="c" style="left:379px;top:396px;height:41px;"><div>MM</div></div>
<div class="c" style="left:492px;top:396px;height:41px;color:#3434cf;letter-spacing:.3px;"><div>Mm/1/mag-glow</div></div>
<div class="c" style="left:621px;top:396px;height:41px;color:#6a6a6a;"><div>Roboczy</div></div>
<div class="c" style="left:735px;top:396px;height:41px;"><div>17.01.2024</div></div>
<div class="c" style="left:848px;top:396px;height:41px;"><div>1</div></div>
<div class="c" style="left:961px;top:396px;height:41px;"><div>1 000,00</div></div>
<div class="c" style="left:1075px;top:396px;height:41px;"><div>1 230,00</div></div>
<div class="c" style="left:1188px;top:396px;height:41px;"><div>-</div></div>
<div class="c" style="left:1532.3px;top:396px;height:41px;"><div>-</div></div>
<div class="c" style="left:1650px;top:396px;height:41px;"><div>glowny</div></div>
<div class="abs" style="left:347px;top:454.0px;width:13px;height:13px;border:1.2px solid #6f78ee;border-radius:3px;background:#fff"></div>
<div class="c" style="left:379px;top:437px;height:53px;"><div>PW</div></div>
<div class="c" style="left:492px;top:437px;height:53px;color:#3434cf;letter-spacing:.3px;"><div>PW/2/123456789</div></div>
<div class="c" style="left:621px;top:437px;height:53px;color:#2b7b4b;letter-spacing:.2px;"><div>Zatwierdzony</div></div>
<div class="c" style="left:735px;top:437px;height:53px;"><div>17.01.2024</div></div>
<div class="c" style="left:848px;top:437px;height:53px;"><div>1</div></div>
<div class="c" style="left:961px;top:437px;height:53px;"><div>1 000,00</div></div>
<div class="c" style="left:1075px;top:437px;height:53px;"><div>1 230,00</div></div>
<div class="c" style="left:1188px;top:437px;height:53px;"><div>-</div></div>
<div class="c" style="left:1532.3px;top:437px;height:53px;"><div>-</div></div>
<div class="c" style="left:1650px;top:437px;height:53px;"><div>testowy<br>magazyn</div></div>
<div class="abs" style="left:340px;top:490px;width:1523px;height:1px;background:#e6e7ec"></div>
<div class="abs" style="left:347px;top:500.5px;width:13px;height:13px;border:1.2px solid #6f78ee;border-radius:3px;background:#fff"></div>
<div class="c" style="left:379px;top:491px;height:39px;"><div>PW</div></div>
<div class="c" style="left:492px;top:491px;height:39px;color:#3434cf;letter-spacing:.3px;"><div>PW/6/mag-glow</div></div>
<div class="c" style="left:621px;top:491px;height:39px;color:#2b7b4b;letter-spacing:.2px;"><div>Zatwierdzony</div></div>
<div class="c" style="left:735px;top:491px;height:39px;"><div>17.01.2024</div></div>
<div class="c" style="left:848px;top:491px;height:39px;"><div>1</div></div>
<div class="c" style="left:961px;top:491px;height:39px;"><div>2 000,00</div></div>
<div class="c" style="left:1075px;top:491px;height:39px;"><div>2 460,00</div></div>
<div class="c" style="left:1188px;top:491px;height:39px;"><div>-</div></div>
<div class="c" style="left:1532.3px;top:491px;height:39px;"><div>-</div></div>
<div class="c" style="left:1650px;top:491px;height:39px;"><div>glowny</div></div>
<div class="abs" style="left:340px;top:530px;width:1523px;height:1px;background:#e6e7ec"></div>
<div class="abs" style="left:347px;top:556.5px;width:13px;height:13px;border:1.2px solid #6f78ee;border-radius:3px;background:#fff"></div>
<div class="c" style="left:379px;top:531px;height:71px;"><div>PZ</div></div>
<div class="c" style="left:492px;top:531px;height:71px;color:#3434cf;letter-spacing:.3px;"><div>PZ/9/mag-glow</div></div>
<div class="c" style="left:621px;top:531px;height:71px;color:#2b7b4b;letter-spacing:.2px;"><div>Zatwierdzony</div></div>
<div class="c" style="left:735px;top:531px;height:71px;"><div>13.11.2023</div></div>
<div class="c" style="left:848px;top:531px;height:71px;"><div>1</div></div>
<div class="c" style="left:961px;top:531px;height:71px;"><div>615,00</div></div>
<div class="c" style="left:1075px;top:531px;height:71px;"><div>756,45</div></div>
<div class="c" style="left:1188px;top:531px;height:71px;"><div>-</div></div>
<div class="c" style="left:1304.5px;top:531px;height:71px;"><div>POWIATOWY<br>URZĄD PRACY W<br>PRZEWORSKU</div></div>
<div class="c" style="left:1532.3px;top:531px;height:71px;"><div>-</div></div>
<div class="c" style="left:1650px;top:531px;height:71px;"><div>glowny</div></div>
<div class="abs" style="left:340px;top:602px;width:1523px;height:1px;background:#e6e7ec"></div>
<div class="abs" style="left:347px;top:619.0px;width:13px;height:13px;border:1.2px solid #6f78ee;border-radius:3px;background:#fff"></div>
<div class="c" style="left:379px;top:603px;height:52px;"><div>PW</div></div>
<div class="c" style="left:492px;top:603px;height:52px;color:#3434cf;letter-spacing:.3px;"><div>PW/4/123456789</div></div>
<div class="c" style="left:621px;top:603px;height:52px;color:#2b7b4b;letter-spacing:.2px;"><div>Zatwierdzony</div></div>
<div class="c" style="left:735px;top:603px;height:52px;"><div>17.01.2024</div></div>
<div class="c" style="left:848px;top:603px;height:52px;"><div>1</div></div>
<div class="c" style="left:961px;top:603px;height:52px;"><div>1 000,00</div></div>
<div class="c" style="left:1075px;top:603px;height:52px;"><div>1 230,00</div></div>
<div class="c" style="left:1188px;top:603px;height:52px;"><div>-</div></div>
<div class="c" style="left:1532.3px;top:603px;height:52px;"><div>-</div></div>
<div class="c" style="left:1650px;top:603px;height:52px;"><div>testowy<br>magazyn</div></div>
<div class="abs" style="left:340px;top:655px;width:1523px;height:1px;background:#e6e7ec"></div>
<div class="abs" style="left:347px;top:665.5px;width:13px;height:13px;border:1.2px solid #6f78ee;border-radius:3px;background:#fff"></div>
<div class="c" style="left:379px;top:656px;height:39px;"><div>PZ</div></div>
<div class="c" style="left:492px;top:656px;height:39px;color:#3434cf;letter-spacing:.3px;"><div>PZ/4/MG-II</div></div>
<div class="c" style="left:621px;top:656px;height:39px;color:#2b7b4b;letter-spacing:.2px;"><div>Zatwierdzony</div></div>
<div class="c" style="left:735px;top:656px;height:39px;"><div>18.07.2022</div></div>
<div class="c" style="left:848px;top:656px;height:39px;"><div>0</div></div>
<div class="c" style="left:961px;top:656px;height:39px;"><div>0,00</div></div>
<div class="c" style="left:1075px;top:656px;height:39px;"><div>0,00</div></div>
<div class="c" style="left:1188px;top:656px;height:39px;"><div>-</div></div>
<div class="c" style="left:1304.5px;top:656px;height:39px;letter-spacing:.2px;"><div>Firma serwisowa</div></div>
<div class="c" style="left:1532.3px;top:656px;height:39px;"><div>-</div></div>
<div class="c" style="left:1650px;top:656px;height:39px;"><div>Magazyn I</div></div>
<div class="abs" style="left:340px;top:695px;width:1523px;height:1px;background:#e6e7ec"></div>
<div class="abs" style="left:347px;top:722.0px;width:13px;height:13px;border:1.2px solid #6f78ee;border-radius:3px;background:#fff"></div>
<div class="c" style="left:379px;top:696px;height:72px;"><div>PZ</div></div>
<div class="c" style="left:492px;top:696px;height:72px;color:#3434cf;letter-spacing:.3px;"><div>PZ/8/123</div></div>
<div class="c" style="left:621px;top:696px;height:72px;color:#2b7b4b;letter-spacing:.2px;"><div>Zatwierdzony</div></div>
<div class="c" style="left:735px;top:696px;height:72px;"><div>09.11.2023</div></div>
<div class="c" style="left:848px;top:696px;height:72px;"><div>2</div></div>
<div class="c" style="left:961px;top:696px;height:72px;"><div>446,00</div></div>
<div class="c" style="left:1075px;top:696px;height:72px;"><div>548,58</div></div>
<div class="c" style="left:1188px;top:696px;height:72px;"><div>123 09.11.2023</div></div>
<div class="c" style="left:1304.5px;top:696px;height:72px;"><div>POWIATOWY<br>URZĄD PRACY W<br>PRZEWORSKU</div></div>
<div class="c" style="left:1532.3px;top:696px;height:72px;"><div>-</div></div>
<div class="c" style="left:1650px;top:696px;height:72px;"><div>magazyn test1</div></div>
<div class="abs" style="left:340px;top:768px;width:1523px;height:1px;background:#e6e7ec"></div>
<div class="abs" style="left:347px;top:778.5px;width:13px;height:13px;border:1.2px solid #6f78ee;border-radius:3px;background:#fff"></div>
<div class="c" style="left:379px;top:769px;height:39px;"><div>RW</div></div>
<div class="c" style="left:492px;top:769px;height:39px;color:#3434cf;letter-spacing:.3px;"><div>RW/3/mag-glow</div></div>
<div class="c" style="left:621px;top:769px;height:39px;color:#2b7b4b;letter-spacing:.2px;"><div>Zatwierdzony</div></div>
<div class="c" style="left:735px;top:769px;height:39px;"><div>15.09.2023</div></div>
<div class="c" style="left:848px;top:769px;height:39px;"><div>1</div></div>
<div class="c" style="left:961px;top:769px;height:39px;"><div>123,00</div></div>
<div class="c" style="left:1075px;top:769px;height:39px;"><div>151,29</div></div>
<div class="c" style="left:1188px;top:769px;height:39px;"><div>-</div></div>
<div class="c" style="left:1421px;top:769px;height:39px;"><div>Jarek Gąsior</div></div>
<div class="c" style="left:1532.3px;top:769px;height:39px;"><div>-</div></div>
<div class="c" style="left:1650px;top:769px;height:39px;"><div>glowny</div></div>
<div class="abs" style="left:340px;top:808px;width:1523px;height:1px;background:#e6e7ec"></div>
<div class="abs" style="left:347px;top:818.5px;width:13px;height:13px;border:1.2px solid #6f78ee;border-radius:3px;background:#fff"></div>
<div class="c" style="left:379px;top:809px;height:39px;"><div>PZ</div></div>
<div class="c" style="left:492px;top:809px;height:39px;color:#3434cf;letter-spacing:.3px;"><div>PZ/2/MG-II</div></div>
<div class="c" style="left:621px;top:809px;height:39px;color:#6a6a6a;"><div>Roboczy</div></div>
<div class="c" style="left:735px;top:809px;height:39px;"><div>14.07.2022</div></div>
<div class="c" style="left:848px;top:809px;height:39px;"><div>1</div></div>
<div class="c" style="left:961px;top:809px;height:39px;"><div>813,01</div></div>
<div class="c" style="left:1075px;top:809px;height:39px;"><div>1 000,00</div></div>
<div class="c" style="left:1188px;top:809px;height:39px;"><div>-</div></div>
<div class="c" style="left:1304.5px;top:809px;height:39px;letter-spacing:.2px;"><div>Firma serwisowa</div></div>
<div class="c" style="left:1532.3px;top:809px;height:39px;"><div>-</div></div>
<div class="c" style="left:1650px;top:809px;height:39px;"><div>Magazyn I</div></div>
<div class="abs" style="left:340px;top:848px;width:1523px;height:1px;background:#e6e7ec"></div>
<div class="abs" style="left:347px;top:865.0px;width:13px;height:13px;border:1.2px solid #6f78ee;border-radius:3px;background:#fff"></div>
<div class="c" style="left:379px;top:849px;height:52px;"><div>PW</div></div>
<div class="c" style="left:492px;top:849px;height:52px;color:#3434cf;letter-spacing:.3px;"><div>PW/5/123456789</div></div>
<div class="c" style="left:621px;top:849px;height:52px;color:#2b7b4b;letter-spacing:.2px;"><div>Zatwierdzony</div></div>
<div class="c" style="left:735px;top:849px;height:52px;"><div>17.01.2024</div></div>
<div class="c" style="left:848px;top:849px;height:52px;"><div>1</div></div>
<div class="c" style="left:961px;top:849px;height:52px;"><div>2 000,00</div></div>
<div class="c" style="left:1075px;top:849px;height:52px;"><div>2 460,00</div></div>
<div class="c" style="left:1188px;top:849px;height:52px;"><div>-</div></div>
<div class="c" style="left:1532.3px;top:849px;height:52px;"><div>-</div></div>
<div class="c" style="left:1650px;top:849px;height:52px;"><div>testowy<br>magazyn</div></div>
<div class="abs" style="left:340px;top:901px;width:1523px;height:1px;background:#e6e7ec"></div>
<div class="abs" style="left:347px;top:910.5px;width:13px;height:13px;border:1.2px solid #6f78ee;border-radius:3px;background:#fff"></div>
<div class="c" style="left:379px;top:902px;height:37px;"><div>PZ</div></div>
<div class="c" style="left:492px;top:902px;height:37px;color:#3434cf;letter-spacing:.3px;"><div>PZ/3/MG-II</div></div>
<div class="c" style="left:621px;top:902px;height:37px;color:#2b7b4b;letter-spacing:.2px;"><div>Zatwierdzony</div></div>
<div class="c" style="left:735px;top:902px;height:37px;"><div>14.07.2022</div></div>
<div class="c" style="left:848px;top:902px;height:37px;"><div>1</div></div>
<div class="c" style="left:961px;top:902px;height:37px;"><div>1 000,00</div></div>
<div class="c" style="left:1075px;top:902px;height:37px;"><div>1 230,00</div></div>
<div class="c" style="left:1188px;top:902px;height:37px;"><div>-</div></div>
<div class="c" style="left:1304.5px;top:902px;height:37px;letter-spacing:.2px;"><div>Firma serwisowa</div></div>
<div class="c" style="left:1532.3px;top:902px;height:37px;"><div>-</div></div>
<div class="c" style="left:1650px;top:902px;height:37px;"><div>Magazyn I</div></div>
<div class="abs" style="left:339px;top:394px;width:1525.5px;height:44.3px;border:4.7px solid #92d545;border-radius:9px;box-shadow:inset 0 2px 9px rgba(0,0,0,.26), 0 2px 8px rgba(0,0,0,.2)"></div>
<svg class="abs" style="left:1761px;top:404px" width="30" height="26" viewBox="0 0 30 26"><path d="M7.5 .5 H22.5 L29.5 13 L22.5 25.5 H7.5 L.5 13 Z" fill="#e1e5fb"/><path d="M7.6 13.2 Q15 2.2 22.4 13.2 Q15 24.2 7.6 13.2 Z" fill="#a7abee"/><circle cx="15" cy="13.2" r="3.4" fill="#fff"/><path d="M15.2 11 A2.3 2.3 0 1 1 12.9 13.4 L15.2 13.4 Z" fill="#2c2cd4"/></svg>
<svg class="abs" style="left:1793.5px;top:404px" width="30" height="26" viewBox="0 0 30 26"><path d="M7.5 .5 H22.5 L29.5 13 L22.5 25.5 H7.5 L.5 13 Z" fill="#e1e5fb"/><g fill="none" stroke="#2c2cd4" stroke-width="1.15" stroke-linejoin="round"><path d="M14.6 8.4 H10.3 Q9 8.4 9 9.7 V18.6 Q9 19.9 10.3 19.9 H18.6 Q19.9 19.9 19.9 18.6 V15"/><path d="M20.3 7.2 Q21.2 6.3 22.1 7.2 Q23 8.1 22.1 9 L16 15.1 L13.9 15.6 L14.4 13.5 Z"/></g></svg>
<svg class="abs" style="left:1826px;top:404px" width="30" height="26" viewBox="0 0 30 26"><path d="M7.5 .5 H22.5 L29.5 13 L22.5 25.5 H7.5 L.5 13 Z" fill="#e1e5fb"/><g fill="none" stroke="#2c2cd4" stroke-width="1.1" stroke-linejoin="round"><path d="M9.6 9.3 H20.4 M13 9.3 V7.6 Q13 7 13.6 7 H16.4 Q17 7 17 7.6 V9.3 M10.7 9.3 L11.2 19.2 Q11.3 19.9 12 19.9 H18 Q18.7 19.9 18.8 19.2 L19.3 9.3 M13.2 11.3 V17.8 M15 11.3 V17.8 M16.8 11.3 V17.8"/></g></svg>
<div class="abs" style="left:1903px;top:0;width:17px;height:919px;background:#f1f1f1"></div>
<svg class="abs" style="left:1907px;top:6px" width="8" height="5" viewBox="0 0 8 5"><path d="M0 5 H8 L4 0 Z" fill="#a3a3a3"/></svg>
<div class="abs" style="left:1905px;top:17px;width:13px;height:551px;background:#c1c1c1"></div>
<svg class="abs" style="left:1907px;top:907px" width="8" height="5" viewBox="0 0 8 5"><path d="M0 0 H8 L4 5 Z" fill="#505050"/></svg>
</div></body></html>
